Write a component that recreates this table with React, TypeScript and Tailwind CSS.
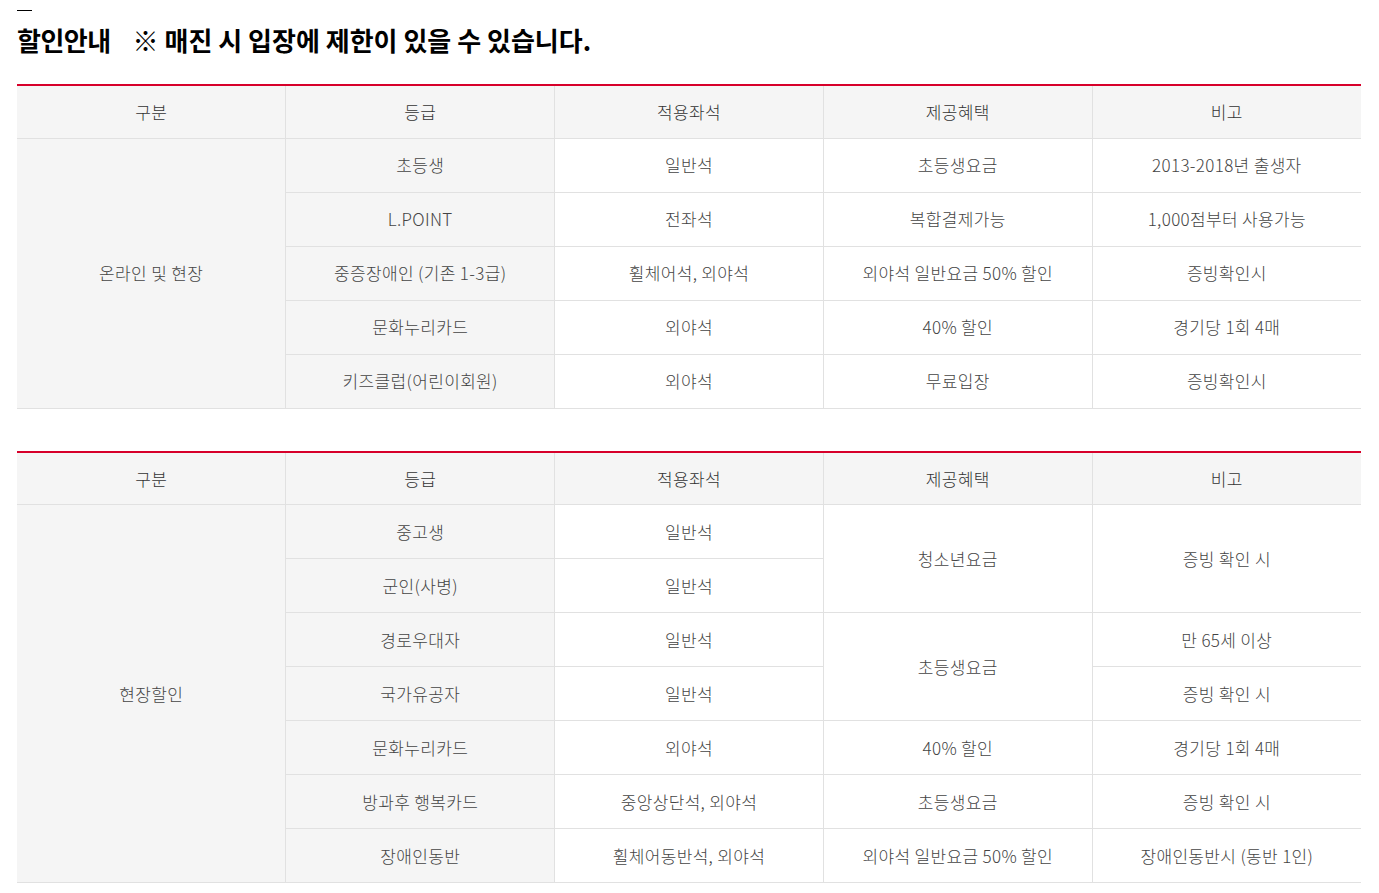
const font = { fontFamily: '"Noto Sans CJK KR", "Noto Sans", sans-serif' }

const heads = ["구분", "등급", "적용좌석", "제공혜택", "비고"]

function Head() {
    return (
        <thead>
            <tr className="h-[53px] bg-[#f5f5f5]">
                {heads.map((h) => (
                    <th key={h} className="border-x border-b border-[#e1e1e1] first:border-l-0 last:border-r-0 font-light text-[17px] tracking-[0.02em] text-[#333]">{h}</th>
                ))}
            </tr>
        </thead>
    )
}

const td = "border border-[#e1e1e1] text-[17px] font-light tracking-[0.02em] text-[#444] text-center"
const gray = "bg-[#f5f5f5]"

export default function App() {
    return (
        <div className="bg-white w-[1379px] h-[893px] overflow-hidden pl-[17px] pt-[10px]" style={font}>
            <div className="w-[15px] h-px bg-black"></div>
            <h2 className="mt-[14px] text-[26px] font-bold text-black leading-[30px]">
                <span className="tracking-[-0.02em]">할인안내</span><span className="ml-[22px]">※ 매진 시 입장에 제한이 있을 수 있습니다.</span>
            </h2>

            <table className="mt-[29px] w-[1344px] table-fixed border-collapse border-t-2 border-t-[#d7002a]">
                <Head />
                <tbody>
                    <tr className="h-[54px]">
                        <td rowSpan={5} className={`${td} ${gray} border-l-0`}>온라인 및 현장</td>
                        <td className={`${td} ${gray}`}>초등생</td>
                        <td className={td}>일반석</td>
                        <td className={td}>초등생요금</td>
                        <td className={`${td} border-r-0`}>2013-2018년 출생자</td>
                    </tr>
                    <tr className="h-[54px]">
                        <td className={`${td} ${gray}`}>L.POINT</td>
                        <td className={td}>전좌석</td>
                        <td className={td}>복합결제가능</td>
                        <td className={`${td} border-r-0`}>1,000점부터 사용가능</td>
                    </tr>
                    <tr className="h-[54px]">
                        <td className={`${td} ${gray}`}>중증장애인 (기존 1-3급)</td>
                        <td className={td}>휠체어석, 외야석</td>
                        <td className={td}>외야석 일반요금 50% 할인</td>
                        <td className={`${td} border-r-0`}>증빙확인시</td>
                    </tr>
                    <tr className="h-[54px]">
                        <td className={`${td} ${gray}`}>문화누리카드</td>
                        <td className={td}>외야석</td>
                        <td className={td}>40% 할인</td>
                        <td className={`${td} border-r-0`}>경기당 1회 4매</td>
                    </tr>
                    <tr className="h-[54px]">
                        <td className={`${td} ${gray}`}>키즈클럽(어린이회원)</td>
                        <td className={td}>외야석</td>
                        <td className={td}>무료입장</td>
                        <td className={`${td} border-r-0`}>증빙확인시</td>
                    </tr>
                </tbody>
            </table>

            <table className="mt-[42px] w-[1344px] table-fixed border-collapse border-t-2 border-t-[#d7002a]">
                <Head />
                <tbody>
                    <tr className="h-[54px]">
                        <td rowSpan={7} className={`${td} ${gray} border-l-0`}>현장할인</td>
                        <td className={`${td} ${gray}`}>중고생</td>
                        <td className={td}>일반석</td>
                        <td rowSpan={2} className={td}>청소년요금</td>
                        <td rowSpan={2} className={`${td} border-r-0`}>증빙 확인 시</td>
                    </tr>
                    <tr className="h-[54px]">
                        <td className={`${td} ${gray}`}>군인(사병)</td>
                        <td className={td}>일반석</td>
                    </tr>
                    <tr className="h-[54px]">
                        <td className={`${td} ${gray}`}>경로우대자</td>
                        <td className={td}>일반석</td>
                        <td rowSpan={2} className={td}>초등생요금</td>
                        <td className={`${td} border-r-0`}>만 65세 이상</td>
                    </tr>
                    <tr className="h-[54px]">
                        <td className={`${td} ${gray}`}>국가유공자</td>
                        <td className={td}>일반석</td>
                        <td className={`${td} border-r-0`}>증빙 확인 시</td>
                    </tr>
                    <tr className="h-[54px]">
                        <td className={`${td} ${gray}`}>문화누리카드</td>
                        <td className={td}>외야석</td>
                        <td className={td}>40% 할인</td>
                        <td className={`${td} border-r-0`}>경기당 1회 4매</td>
                    </tr>
                    <tr className="h-[54px]">
                        <td className={`${td} ${gray}`}>방과후 행복카드</td>
                        <td className={td}>중앙상단석, 외야석</td>
                        <td className={td}>초등생요금</td>
                        <td className={`${td} border-r-0`}>증빙 확인 시</td>
                    </tr>
                    <tr className="h-[54px]">
                        <td className={`${td} ${gray}`}>장애인동반</td>
                        <td className={td}>휠체어동반석, 외야석</td>
                        <td className={td}>외야석 일반요금 50% 할인</td>
                        <td className={`${td} border-r-0`}>장애인동반시 (동반 1인)</td>
                    </tr>
                </tbody>
            </table>
        </div>
    )
}
